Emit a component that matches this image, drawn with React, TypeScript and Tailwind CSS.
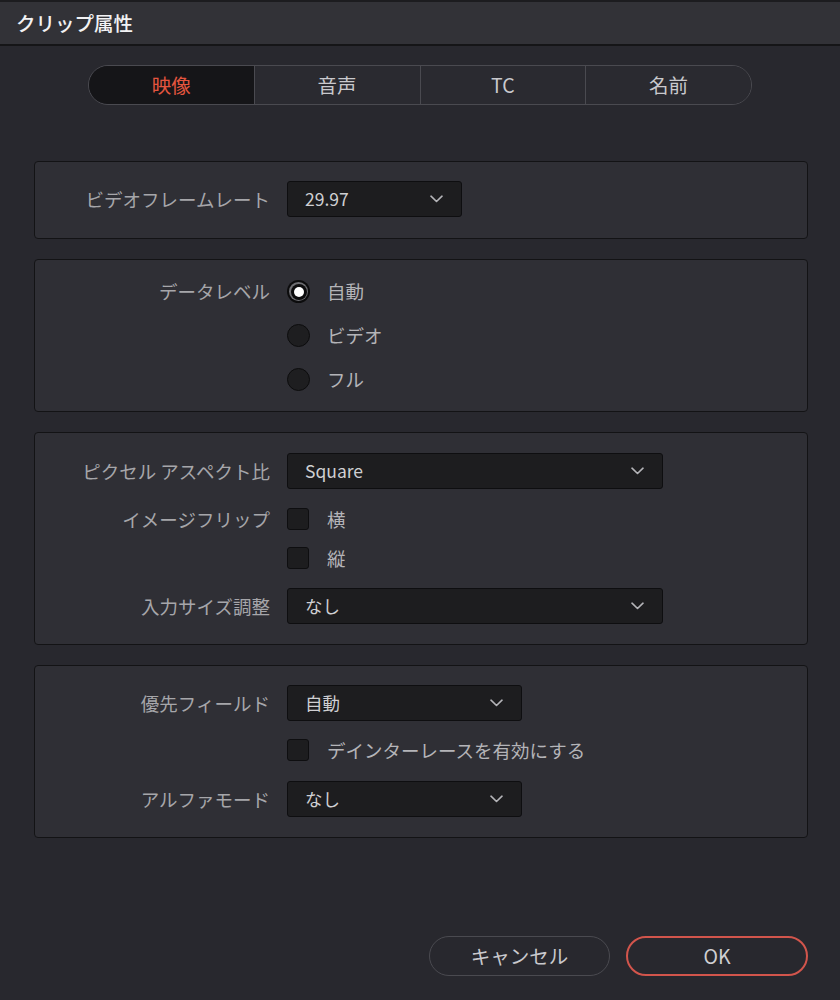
import React from "react";

const FONT = { fontFamily: '"Noto Sans CJK JP", "Noto Sans", sans-serif' };

function Chevron() {
  return (
    <svg width="13" height="8" viewBox="0 0 13 8" fill="none">
      <path d="M1 1.2 L6.5 6.5 L12 1.2" stroke="#b4b4b8" strokeWidth="1.6" strokeLinecap="round" strokeLinejoin="round" />
    </svg>
  );
}

function Select({ value, width }: { value: string; width: string }) {
  return (
    <div
      className={`${width} h-[36px] flex items-center justify-between pl-[17px] pr-[18px] bg-[#1d1d1f] border border-[#0e0e10] rounded-[3px]`}
    >
      <span className="text-[17.5px] leading-none text-[#cfcfd2]">{value}</span>
      <Chevron />
    </div>
  );
}

function Label({ children }: { children: React.ReactNode }) {
  return (
    <div className="w-[235px] shrink-0 text-right text-[18.5px] leading-none text-[#a6a6aa] whitespace-nowrap">
      {children}
    </div>
  );
}

function Row({ label, children, h = "h-[36px]" }: { label?: string; children: React.ReactNode; h?: string }) {
  return (
    <div className={`flex items-center ${h}`}>
      <Label>{label ?? ""}</Label>
      <div className="ml-[17px] flex items-center">{children}</div>
    </div>
  );
}

function Radio({ selected, text }: { selected?: boolean; text: string }) {
  return (
    <div className="flex items-center">
      {selected ? (
        <div className="w-[23px] h-[23px] rounded-full bg-[#0c0c0d] flex items-center justify-center">
          <div className="w-[19px] h-[19px] rounded-full bg-[#6e6e72] flex items-center justify-center">
            <div className="w-[16px] h-[16px] rounded-full bg-[#0c0c0d] flex items-center justify-center">
              <div className="w-[10px] h-[10px] rounded-full bg-white" />
            </div>
          </div>
        </div>
      ) : (
        <div className="w-[23px] h-[23px] rounded-full bg-[#1e1e20] border-[1.5px] border-[#0c0c0d]" />
      )}
      <span className="ml-[17px] text-[18.5px] leading-none text-[#b4b4b8]">{text}</span>
    </div>
  );
}

function Check({ text }: { text: string }) {
  return (
    <div className="flex items-center">
      <div className="w-[22px] h-[22px] rounded-[3px] bg-[#1d1d1f] border border-[#0e0e10]" />
      <span className="ml-[18px] text-[18.5px] leading-none text-[#b4b4b8]">{text}</span>
    </div>
  );
}

function Panel({ children, className = "" }: { children: React.ReactNode; className?: string }) {
  return (
    <div className={`bg-[#2f2f35] border border-[#131315] rounded-[4px] flex flex-col ${className}`}>
      {children}
    </div>
  );
}

export default function App() {
  const tabs = ["映像", "音声", "TC", "名前"];
  return (
    <div className="w-[840px] h-[1000px] bg-[#28282e] flex flex-col" style={FONT}>
      <div className="h-[46px] shrink-0 bg-[#323237] border-t-2 border-t-[#1c1c1f] border-b-2 border-b-[#151517] flex items-center pl-[16px]">
        <span className="text-[19.5px] font-medium leading-none text-[#f2f2f4]">クリップ属性</span>
      </div>

      <div className="mt-[19px] mx-auto w-[664px] h-[40px] flex rounded-full border-[1.5px] border-[#4a4a50] overflow-hidden">
        {tabs.map((t, i) => (
          <div
            key={t}
            className={`flex-1 flex items-center justify-center text-[19.5px] leading-none ${
              i === 0 ? "bg-[#151518] text-[#e4553f]" : "bg-[#2a2a30] text-[#c9c9cd]"
            } ${i > 0 ? "border-l-[1.5px] border-l-[#4a4a50]" : ""}`}
          >
            {t}
          </div>
        ))}
      </div>

      <div className="ml-[34px] mr-[32px] mt-[56px] flex flex-col gap-[20px]">
        <Panel className="pt-[19px] pb-[21px]">
          <Row label="ビデオフレームレート">
            <Select value="29.97" width="w-[175px]" />
          </Row>
        </Panel>

        <Panel className="pt-[20px] pb-[20px] gap-[21px]">
          <Row label="データレベル" h="h-[23px]">
            <Radio selected text="自動" />
          </Row>
          <Row h="h-[23px]">
            <Radio text="ビデオ" />
          </Row>
          <Row h="h-[23px]">
            <Radio text="フル" />
          </Row>
        </Panel>

        <Panel className="pt-[20px] pb-[20px]">
          <Row label="ピクセル アスペクト比">
            <Select value="Square" width="w-[376px]" />
          </Row>
          <div className="mt-[19px]">
            <Row label="イメージフリップ" h="h-[22px]">
              <Check text="横" />
            </Row>
          </div>
          <div className="mt-[17px]">
            <Row h="h-[22px]">
              <Check text="縦" />
            </Row>
          </div>
          <div className="mt-[19px]">
            <Row label="入力サイズ調整">
              <Select value="なし" width="w-[376px]" />
            </Row>
          </div>
        </Panel>

        <Panel className="pt-[19px] pb-[20px]">
          <Row label="優先フィールド">
            <Select value="自動" width="w-[235px]" />
          </Row>
          <div className="mt-[18px]">
            <Row h="h-[22px]">
              <Check text="デインターレースを有効にする" />
            </Row>
          </div>
          <div className="mt-[20px]">
            <Row label="アルファモード">
              <Select value="なし" width="w-[235px]" />
            </Row>
          </div>
        </Panel>
      </div>

      <div className="mt-[98px] mr-[32px] flex justify-end gap-[16px]">
        <div className="w-[181px] h-[40px] rounded-full border-[1.5px] border-[#4a4a50] flex items-center justify-center text-[19.5px] leading-none text-[#c9c9cd]">
          キャンセル
        </div>
        <div className="w-[182px] h-[40px] rounded-full border-2 border-[#d2554c] flex items-center justify-center text-[19.5px] leading-none text-[#cfcfd2]">
          OK
        </div>
      </div>
    </div>
  );
}
